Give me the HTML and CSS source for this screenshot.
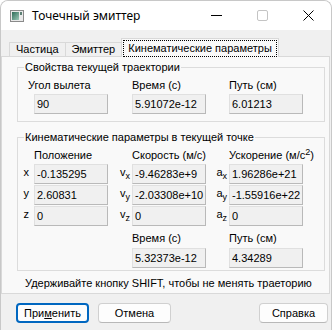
FILE: index.html
```html
<!DOCTYPE html>
<html lang="ru">
<head>
    <meta charset="UTF-8">
    <title>Точечный эмиттер</title>
    <link rel="stylesheet" href="styles.css">
</head>
<body>

    <div class="window">
        <div class="titlebar">
            <svg class="app-icon" width="14" height="12" viewBox="0 0 14 12">
                <defs>
                    <linearGradient id="ico" x1="0" y1="0" x2="1" y2="1">
                        <stop offset="0" stop-color="#2f6b58"/>
                        <stop offset="1" stop-color="#9cc8b8"/>
                    </linearGradient>
                </defs>
                <rect x="0.5" y="0.5" width="13" height="11" fill="#e9e9e9" stroke="#8a8a8a"/>
                <rect x="2" y="2" width="7" height="8" fill="url(#ico)"/>
                <rect x="10" y="2" width="2" height="3" fill="#5c7f74"/>
            </svg>
            <span class="title">Точечный эмиттер</span>
            <div class="controls">
                <span class="ctl">
                    <svg width="11" height="11" viewBox="0 0 11 11"><path d="M0 5.5h11" stroke="#000" stroke-width="1"/></svg>
                </span>
                <span class="ctl">
                    <svg width="11" height="11" viewBox="0 0 11 11"><rect x="0.5" y="0.5" width="10" height="10" rx="1.5" fill="none" stroke="#c4c4c4"/></svg>
                </span>
                <span class="ctl">
                    <svg width="11" height="11" viewBox="0 0 11 11"><path d="M0.5 0.5l10 10M10.5 0.5l-10 10" stroke="#000" stroke-width="1"/></svg>
                </span>
            </div>
        </div>

        <div class="tabs">
            <div class="tab">Частица</div>
            <div class="tab">Эмиттер</div>
            <div class="tab active"><span class="focus">Кинематические параметры</span></div>
        </div>

        <div class="pane">
            <fieldset class="group">
                <legend>Свойства текущей траектории</legend>
                <div class="grid">
                    <span></span><span class="head first">Угол вылета</span>
                    <span></span><span class="head">Время (с)</span>
                    <span></span><span class="head">Путь (см)</span>

                    <span></span><span class="field">90</span>
                    <span></span><span class="field">5.91072e-12</span>
                    <span></span><span class="field">6.01213</span>
                </div>
            </fieldset>

            <fieldset class="group">
                <legend>Кинематические параметры в текущей точке</legend>
                <div class="grid rows">
                    <span></span><span class="head">Положение</span>
                    <span></span><span class="head">Скорость (м/с)</span>
                    <span></span><span class="head">Ускорение (м/с<span class="sup">2</span>)</span>

                    <span class="axis pos">x</span><span class="field">-0.135295</span>
                    <span class="axis">v<sub>x</sub></span><span class="field">-9.46283e+9</span>
                    <span class="axis">a<sub>x</sub></span><span class="field">1.96286e+21</span>

                    <span class="axis pos">y</span><span class="field">2.60831</span>
                    <span class="axis">v<sub>y</sub></span><span class="field">-2.03308e+10</span>
                    <span class="axis">a<sub>y</sub></span><span class="field">-1.55916e+22</span>

                    <span class="axis pos">z</span><span class="field">0</span>
                    <span class="axis">v<sub>z</sub></span><span class="field">0</span>
                    <span class="axis">a<sub>z</sub></span><span class="field">0</span>
                </div>
                <div class="grid totals">
                    <span></span><span></span>
                    <span></span><span class="head">Время (с)</span>
                    <span></span><span class="head">Путь (см)</span>

                    <span></span><span></span>
                    <span></span><span class="field">5.32373e-12</span>
                    <span></span><span class="field">4.34289</span>
                </div>
            </fieldset>

            <p class="hint">Удерживайте кнопку SHIFT, чтобы не менять траеторию</p>
        </div>

        <div class="buttons">
            <button class="btn default">При<u>м</u>енить</button>
            <button class="btn">Отмена</button>
            <button class="btn help">Справка</button>
        </div>
    </div>

</body>
</html>
```

FILE: styles.css
```css
* {
    box-sizing: border-box;
}

body {
    margin: 0;
    background: #fff;
    font-family: "Liberation Sans", Arial, sans-serif;
    font-size: 11px;
    color: #000;
}

.window {
    width: 332px;
    height: 330px;
    background: #f0f0f0;
    border: 1px solid #c8c8c8;
    border-bottom: none;
    border-radius: 8px 8px 0 0;
    overflow: hidden;
    display: flex;
    flex-direction: column;
}

/* title bar */
.titlebar {
    height: 29px;
    background: #fff;
    display: flex;
    align-items: center;
    flex-shrink: 0;
}

.app-icon {
    margin-left: 9px;
    margin-top: 1px;
}

.title {
    margin-left: 8px;
    font-family: "Noto Sans", "Open Sans", sans-serif;
    font-size: 12px;
}

.controls {
    margin-left: auto;
    display: flex;
    align-items: center;
}

.ctl {
    width: 46px;
    height: 29px;
    display: flex;
    align-items: center;
    justify-content: center;
}

/* tabs */
.tabs {
    margin-top: 8px;
    height: 18px;
    padding-left: 8px;
    display: flex;
    align-items: flex-end;
    flex-shrink: 0;
}

.tab {
    height: 14px;
    padding: 0 6px;
    border: 1px solid #d9d9d9;
    border-bottom: none;
    margin-right: -1px;
    line-height: 13px;
    background: #f0f0f0;
}

.tab.active {
    height: 19px;
    margin-bottom: -1px;
    padding: 1px 1px 0 1px;
    background: #f9f9f9;
    position: relative;
    z-index: 1;
}

.focus {
    display: block;
    height: 17px;
    padding: 0 4px;
    line-height: 15px;
    border: 1px dotted #000;
}

/* tab page */
.pane {
    height: 238px;
    margin-right: 1px;
    padding: 3px 4px 0 15px;
    border: 1px solid #d9d9d9;
    background: #f9f9f9;
    flex-shrink: 0;
}

.group {
    margin: 0 0 8px 0;
    padding: 0 0 7px 0;
    border: 1px solid #dcdcdc;
    min-width: 0;
}

.group + .group {
    padding-bottom: 2px;
    margin-bottom: 0;
}

.group legend {
    margin-left: 6px;
    padding: 0 1px;
    line-height: 14px;
}

.grid {
    display: grid;
    grid-template-columns: 16px 74px 24px 74px 23px 74px;
    grid-template-rows: 15px 20px;
    row-gap: 1px;
    margin-top: 4px;
}

.grid.rows {
    grid-template-rows: 15px 20px 20px 20px;
}

.grid.totals {
    grid-template-rows: 16px 20px;
    margin-top: 5px;
}

.head {
    line-height: 14px;
    white-space: nowrap;
}

.head.first {
    margin-left: -6px;
}

.sup {
    font-size: 9px;
    line-height: 0;
    vertical-align: 4px;
}

.field {
    height: 20px;
    padding-left: 2px;
    line-height: 18px;
    background: #f0f0f0;
    border: 1px solid #e0e0e0;
    border-right-color: #b9b9b9;
    border-bottom-color: #b9b9b9;
    white-space: nowrap;
}

.axis {
    text-align: right;
    padding-right: 2px;
    line-height: 17px;
}

.axis.pos {
    padding-right: 5px;
}

.axis sub {
    font-size: 9px;
    vertical-align: -3px;
    line-height: 0;
}

.hint {
    margin: 5px 0 0 8px;
    line-height: 14px;
}

/* dialog buttons */
.buttons {
    margin-top: 9px;
    padding-left: 15px;
    display: flex;
}

.btn {
    width: 73px;
    height: 20px;
    padding: 0;
    margin-right: 9px;
    font-family: "Liberation Sans", Arial, sans-serif;
    font-size: 11px;
    color: #000;
    background: #fdfdfd;
    border: 1px solid #d0d0d0;
    border-bottom-color: #b8b8b8;
    border-radius: 4px;
}

.btn.default {
    border: 2px solid #0067c0;
}

.btn.help {
    margin-left: auto;
    margin-right: 3px;
    width: 69px;
}
```
